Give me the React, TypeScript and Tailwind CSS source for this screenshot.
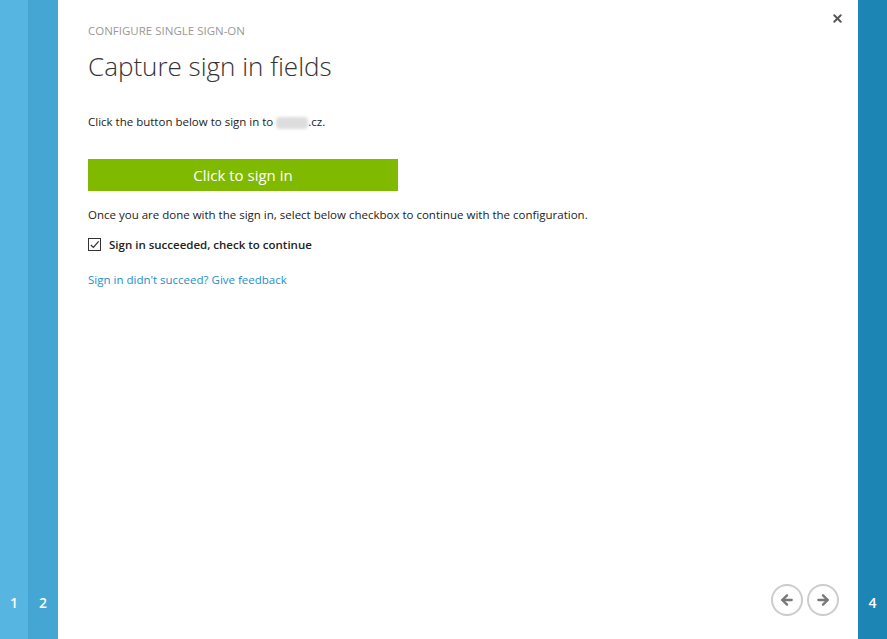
import { ArrowLeft, ArrowRight, X } from "lucide-react"

export default function App() {
  return (
    <div className="flex h-[639px] w-full overflow-hidden bg-white font-['Open_Sans',sans-serif]">
      {/* Step strips */}
      <div className="flex w-[28px] flex-col justify-end bg-[#56b6e1] pb-[26px] text-center text-[14px] font-semibold text-white">
        1
      </div>
      <div className="flex w-[30px] flex-col justify-end bg-[#45a6d3] pb-[26px] text-center text-[14px] font-semibold text-white">
        2
      </div>

      {/* Main panel */}
      <div className="relative flex flex-1 flex-col pl-[30px] pr-[19px] pt-[23px] pb-[23px]">
        <button className="absolute right-[14px] top-[12px] text-[#555]">
          <X className="h-[13px] w-[13px]" strokeWidth={3.5} />
        </button>

        <div className="text-[11.5px] uppercase leading-[16px] text-[#999]">Configure single sign-on</div>
        <h1 className="mt-[9px] text-[26px] font-light leading-[36px] text-[#333]">Capture sign in fields</h1>

        <p className="mt-[29px] text-[11.5px] leading-[18px] text-[#222]">
          Click the button below to sign in to{" "}
          <span className="inline-block h-[12px] w-[32px] rounded-sm bg-[#ddd] align-middle blur-[1.5px]"></span>
          .cz.
        </p>

        <button className="mt-[28px] h-[32px] w-[310px] bg-[#7fba00] text-[15px] text-white">Click to sign in</button>

        <p className="mt-[15px] text-[11.5px] leading-[18px] text-[#222]">
          Once you are done with the sign in, select below checkbox to continue with the configuration.
        </p>

        <label className="mt-[12px] flex items-center gap-[8px] text-[11.5px] font-semibold text-[#222]">
          <span className="flex h-[13px] w-[13px] items-center justify-center border border-[#333] bg-white">
            <svg viewBox="0 0 12 12" className="h-[11px] w-[11px]">
              <path d="M2 6.5 L4.8 9.2 L10.5 2.5" fill="none" stroke="#333" strokeWidth="1.4" />
            </svg>
          </span>
          Sign in succeeded, check to continue
        </label>

        <a className="mt-[18px] text-[11.5px] leading-[18px] text-[#1d8fcb]">Sign in didn't succeed? Give feedback</a>

        <div className="mt-auto flex justify-end gap-[4px]">
          <button className="flex h-[32px] w-[32px] items-center justify-center rounded-full border-2 border-[#ccc] text-[#777]">
            <ArrowLeft className="h-[16px] w-[16px]" strokeWidth={3.5} />
          </button>
          <button className="flex h-[32px] w-[32px] items-center justify-center rounded-full border-2 border-[#ccc] text-[#777]">
            <ArrowRight className="h-[16px] w-[16px]" strokeWidth={3.5} />
          </button>
        </div>
      </div>

      <div className="flex w-[29px] flex-col justify-end bg-[#1c85b4] pb-[26px] text-center text-[14px] font-semibold text-white">
        4
      </div>
    </div>
  )
}
